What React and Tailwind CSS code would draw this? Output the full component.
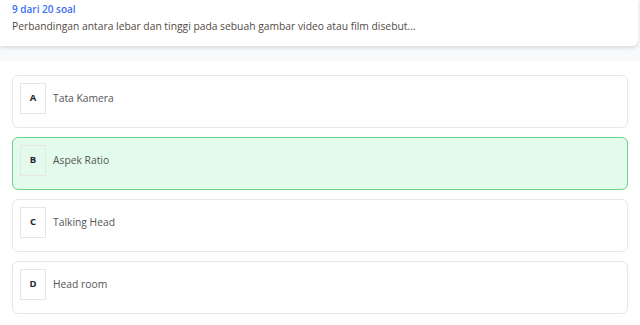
import React from 'react';

const options = [
  { key: 'A', label: 'Tata Kamera' },
  { key: 'B', label: 'Aspek Ratio', selected: true },
  { key: 'C', label: 'Talking Head' },
  { key: 'D', label: 'Head room' },
];

export default function App() {
  return (
    <div className="w-[640px] h-[325px] bg-white overflow-hidden" style={{ fontFamily: '"Open Sans", sans-serif' }}>
      {/* Question header */}
      <div className="bg-[#f8f9fa] pb-[15px]">
        <div className="bg-white w-[638px] rounded-br-md shadow-[0_2px_4px_rgba(0,0,0,0.12)] px-3 pt-[1px] pb-[12px]">
          <p className="text-[10px] font-semibold text-[#3b6ef6] leading-[16px]">9 dari 20 soal</p>
          <p className="text-[10.3px] text-[#534a45] leading-[16px] mt-[1px]">
            Perbandingan antara lebar dan tinggi pada sebuah gambar video atau film disebut...
          </p>
        </div>
      </div>

      {/* Options */}
      <div className="flex flex-col gap-[9px] px-3 pt-[14px]">
        {options.map((o) => (
          <div
            key={o.key}
            className={`h-[53px] rounded-md border flex items-start gap-[7px] px-[7px] pt-[7px] ${
              o.selected ? 'bg-[#e3fbea] border-[#6fd08f]' : 'bg-white border-[#e8e8ea]'
            }`}
          >
            <div className="w-[26px] h-[31px] border border-[#e6e6ea] flex items-center justify-center text-[9.5px] font-bold text-[#1f1f2b]">
              {o.key}
            </div>
            <span className="text-[10.3px] text-[#555] leading-[31px]">{o.label}</span>
          </div>
        ))}
      </div>
    </div>
  );
}
